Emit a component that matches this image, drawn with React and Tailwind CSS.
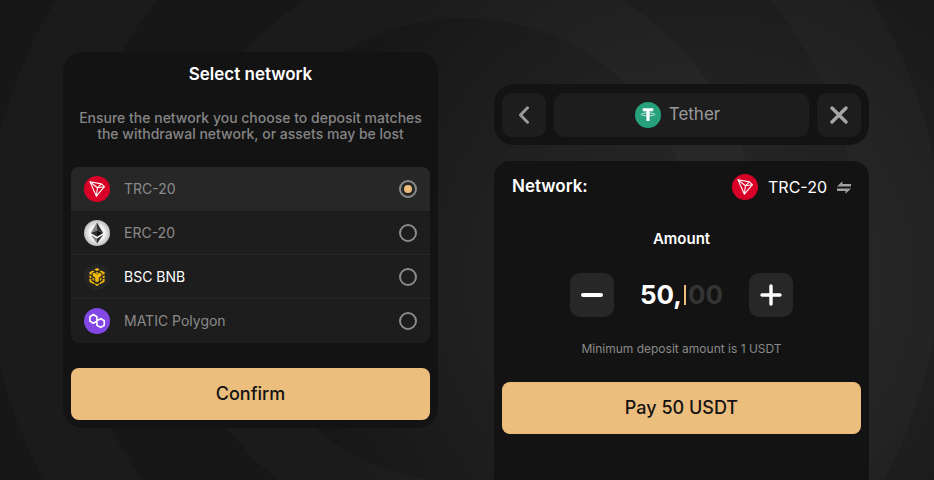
import React, { useState } from "react";

const TronIcon = () => (
  <svg viewBox="0 0 26 26" className="size-[26px] shrink-0" aria-hidden="true">
    <circle cx="13" cy="13" r="13" fill="#d80027" />
    <g fill="none" stroke="#fff" strokeWidth="1.1" strokeLinejoin="round">
      <path d="M6 5.8 L17.3 7.9 L20.4 10.7 L12.4 20.2 Z" />
      <path d="M6 5.8 L13.4 11.8 L12.4 20.2" />
      <path d="M13.4 11.8 L17.3 7.9" />
      <path d="M13.4 11.8 L20.4 10.7" />
    </g>
  </svg>
);

const EthereumIcon = () => (
  <svg viewBox="0 0 26 26" className="size-[26px] shrink-0" aria-hidden="true">
    <defs>
      <radialGradient id="ethBg">
        <stop offset="55%" stopColor="#f6f6f6" />
        <stop offset="100%" stopColor="#bdbdbd" />
      </radialGradient>
    </defs>
    <circle cx="13" cy="13" r="13" fill="url(#ethBg)" />
    <path d="M13 2.5 L6.8 13 L13 10.4 Z" fill="#828384" />
    <path d="M13 2.5 L19.2 13 L13 10.4 Z" fill="#343434" />
    <path d="M6.8 13 L13 10.4 V16.8 Z" fill="#2f3030" />
    <path d="M19.2 13 L13 10.4 V16.8 Z" fill="#131313" />
    <path d="M6.8 14.8 L13 18.4 V23.6 Z" fill="#828384" />
    <path d="M19.2 14.8 L13 18.4 V23.6 Z" fill="#2f3030" />
  </svg>
);

const BnbIcon = () => (
  <svg viewBox="0 0 26 26" className="size-[26px] shrink-0" aria-hidden="true">
    <circle cx="13" cy="13" r="13" fill="#242424" />
    <g fill="#f0b90b">
      <path d="M13 4 L15.8 5.6 L13 7.2 L10.2 5.6 Z" />
      <path d="M8.8 6.4 L10.6 7.4 L7.6 9.2 V11 L5.4 9.9 V8.2 Z" />
      <path d="M17.2 6.4 L20.6 8.2 V9.9 L18.4 11 V9.2 L15.4 7.4 Z" />
      <path d="M13 8 L14.8 9 L13 10 L11.2 9 Z" />
      <path d="M8.6 9.6 L10.4 8.7 L13 10.5 L15.6 8.7 L17.4 9.6 V12 L14.8 13.8 V17.2 L13 18.2 L11.2 17.2 V13.8 L8.6 12 Z" />
      <path d="M5.4 11.2 L7.4 12.2 V14.4 L5.4 13.4 Z" />
      <path d="M20.6 11.2 L18.6 12.2 V14.4 L20.6 13.4 Z" />
      <path d="M5.4 14.6 L7.4 15.6 V17 L10.4 18.7 V20.6 L5.4 17.8 Z" />
      <path d="M20.6 14.6 L18.6 15.6 V17 L15.6 18.7 V20.6 L20.6 17.8 Z" />
      <path d="M8.6 13.6 L10.2 14.6 V16.9 L8.6 16 Z" />
      <path d="M17.4 13.6 L15.8 14.6 V16.9 L17.4 16 Z" />
      <path d="M11.2 19.2 L13 20.2 L14.8 19.2 V21 L13 22 L11.2 21 Z" />
    </g>
  </svg>
);

const PolygonIcon = () => (
  <svg viewBox="0 0 26 26" className="size-[26px] shrink-0" aria-hidden="true">
    <circle cx="13" cy="13" r="13" fill="#8247e5" />
    <path
      d="M11.8 13.8 L9.4 15.3 L5.9 13.1 V8.7 L9.4 6.5 L12.9 8.7 V17.2 L16.7 19.4 L20.2 17.2 V12.8 L16.7 10.6 L14.3 12"
      fill="none"
      stroke="#fff"
      strokeWidth="1.6"
      strokeLinejoin="round"
      strokeLinecap="round"
    />
  </svg>
);

const TetherIcon = () => (
  <svg viewBox="0 0 26 26" className="size-[26px] shrink-0" aria-hidden="true">
    <circle cx="13" cy="13" r="13" fill="#26a17b" />
    <path d="M7.8 6.2 H18.2 V9.2 H14.6 V19 H11.4 V9.2 H7.8 Z" fill="#fff" />
    <ellipse cx="13" cy="12.4" rx="6.8" ry="1.4" fill="none" stroke="#fff" strokeWidth="0.7" />
  </svg>
);

const SwapIcon = () => (
  <svg viewBox="0 0 14 13" className="h-[13px] w-[14px] shrink-0" fill="#a0a0a0" aria-hidden="true">
    <path d="M0 5.4 L5.4 0.2 V3 H14 V5.4 Z" />
    <path d="M14 7.6 L8.6 12.8 V10 H0 V7.6 Z" />
  </svg>
);

const networks = [
  { id: "trc", name: "TRC-20", icon: <TronIcon /> },
  { id: "erc", name: "ERC-20", icon: <EthereumIcon /> },
  { id: "bsc", name: "BSC BNB", icon: <BnbIcon />, highlighted: true },
  { id: "matic", name: "MATIC Polygon", icon: <PolygonIcon /> },
];

const Backdrop = () => (
  <svg
    viewBox="0 0 934 480"
    preserveAspectRatio="xMidYMid slice"
    className="absolute inset-0 -z-10 size-full"
    aria-hidden="true"
  >
    <defs>
      <radialGradient id="glow" gradientUnits="userSpaceOnUse" cx="700" cy="280" r="400">
        <stop offset="0%" stopColor="#2a2a2a" />
        <stop offset="50%" stopColor="#212121" />
        <stop offset="100%" stopColor="#171717" />
      </radialGradient>
    </defs>
    <rect width="934" height="480" fill="url(#glow)" />
    <g fill="none" stroke="#fff" strokeOpacity="0.018">
      <circle cx="464" cy="250" r="264" strokeWidth="64" />
      <circle cx="464" cy="250" r="437" strokeWidth="83" />
    </g>
  </svg>
);

const NetworkPicker = () => {
  const [selected, setSelected] = useState("trc");

  return (
    <section className="mt-[52px] rounded-[20px] bg-[#131313] px-2 pt-3 pb-2">
      <h2 className="text-center text-[17px] leading-5 font-semibold text-white">Select network</h2>
      <p className="mt-[26px] text-center text-sm leading-4 font-medium text-[#858585]">
        Ensure the network you choose to deposit matches
        <br />
        the withdrawal network, or assets may be lost
      </p>

      <div className="mt-[25px] divide-y divide-[#272727] overflow-hidden rounded-lg bg-[#1d1d1d]">
        {networks.map((network) => (
          <label
            key={network.id}
            className={`flex h-11 cursor-pointer items-center gap-3.5 px-[13px] text-sm ${
              selected === network.id ? "bg-[#272727]" : ""
            } ${network.highlighted ? "text-white" : "text-[#8a8a8a]"}`}
          >
            {network.icon}
            <span className="flex-1">{network.name}</span>
            <input
              type="radio"
              name="network"
              value={network.id}
              checked={selected === network.id}
              onChange={() => setSelected(network.id)}
              className="grid size-[18px] shrink-0 appearance-none place-items-center rounded-full border-2 border-[#8a8a8a] before:size-2 before:rounded-full checked:before:bg-[#ebbe7e]"
            />
          </label>
        ))}
      </div>

      <button
        type="button"
        className="mt-[25px] h-[52px] w-full rounded-lg bg-[#ebbe7e] text-lg font-medium text-[#131313]"
      >
        Confirm
      </button>
    </section>
  );
};

const Toolbar = () => (
  <header className="flex gap-2 rounded-[20px] bg-[#131313] px-2 pt-[9px] pb-2">
    <button
      type="button"
      aria-label="Back"
      className="grid size-11 shrink-0 place-items-center rounded-[10px] bg-[#1d1d1d] text-[#9a9a9a]"
    >
      <svg viewBox="0 0 18 18" className="size-[18px]" fill="none" stroke="currentColor" strokeWidth="3">
        <path d="M12.5 1.8 L5.5 9 L12.5 16.2" strokeLinecap="round" strokeLinejoin="round" />
      </svg>
    </button>
    <div className="flex h-11 flex-1 items-center justify-center gap-2 rounded-[10px] bg-[#1d1d1d] pr-2">
      <TetherIcon />
      <span className="text-[17px] text-[#9a9a9a]">Tether</span>
    </div>
    <button
      type="button"
      aria-label="Close"
      className="grid size-11 shrink-0 place-items-center rounded-[10px] bg-[#1d1d1d] text-[#a6a6a6]"
    >
      <svg viewBox="0 0 18 18" className="size-[18px]" fill="none" stroke="currentColor" strokeWidth="3.4">
        <path d="M2 2 L16 16 M16 2 L2 16" strokeLinecap="round" />
      </svg>
    </button>
  </header>
);

const Deposit = () => {
  const [amount, setAmount] = useState(50);

  return (
    <section className="flex-1 rounded-t-2xl bg-[#131313] px-2 pt-3">
      <div className="flex h-7 items-center justify-between px-2.5">
        <h2 className="text-[17px] font-semibold text-white">Network:</h2>
        <button type="button" className="flex items-center gap-2.5 text-base text-white">
          <TronIcon />
          <span>TRC-20</span>
          <SwapIcon />
        </button>
      </div>

      <h3 className="mt-7 text-center text-[15px] leading-5 font-semibold text-white">Amount</h3>
      <div className="mt-6 flex items-center justify-center gap-[26px]">
        <button
          type="button"
          aria-label="Decrease amount"
          onClick={() => setAmount(Math.max(1, amount - 1))}
          className="grid size-11 place-items-center rounded-[10px] bg-[#272727] text-white"
        >
          <svg viewBox="0 0 22 22" className="size-[22px]" stroke="currentColor" strokeWidth="4">
            <path d="M2 11 H20" strokeLinecap="round" />
          </svg>
        </button>
        <output className="flex items-center text-[26px] leading-8 font-bold text-white">
          {amount},
          <span className="mx-0.5 h-5 w-0.5 bg-[#ebbe7e]" />
          <span className="text-[#343434]">00</span>
        </output>
        <button
          type="button"
          aria-label="Increase amount"
          onClick={() => setAmount(amount + 1)}
          className="grid size-11 place-items-center rounded-[10px] bg-[#272727] text-white"
        >
          <svg viewBox="0 0 22 22" className="size-[22px]" stroke="currentColor" strokeWidth="3.4">
            <path d="M2 11 H20 M11 2 V20" strokeLinecap="round" />
          </svg>
        </button>
      </div>
      <p className="mt-6 text-center text-xs leading-4 text-[#8a8a8a]">
        Minimum deposit amount is 1 USDT
      </p>

      <button
        type="button"
        className="mt-[25px] h-[52px] w-full rounded-lg bg-[#ebbe7e] text-lg font-medium text-[#131313]"
      >
        Pay {amount} USDT
      </button>
    </section>
  );
};

export default function App() {
  return (
    <main className="relative isolate grid min-h-screen grid-cols-2 items-start gap-14 overflow-hidden pr-[65px] pl-[63px] font-['Inter',sans-serif]">
      <Backdrop />
      <NetworkPicker />
      <div className="flex min-h-screen flex-col gap-4 pt-[84px]">
        <Toolbar />
        <Deposit />
      </div>
    </main>
  );
}
